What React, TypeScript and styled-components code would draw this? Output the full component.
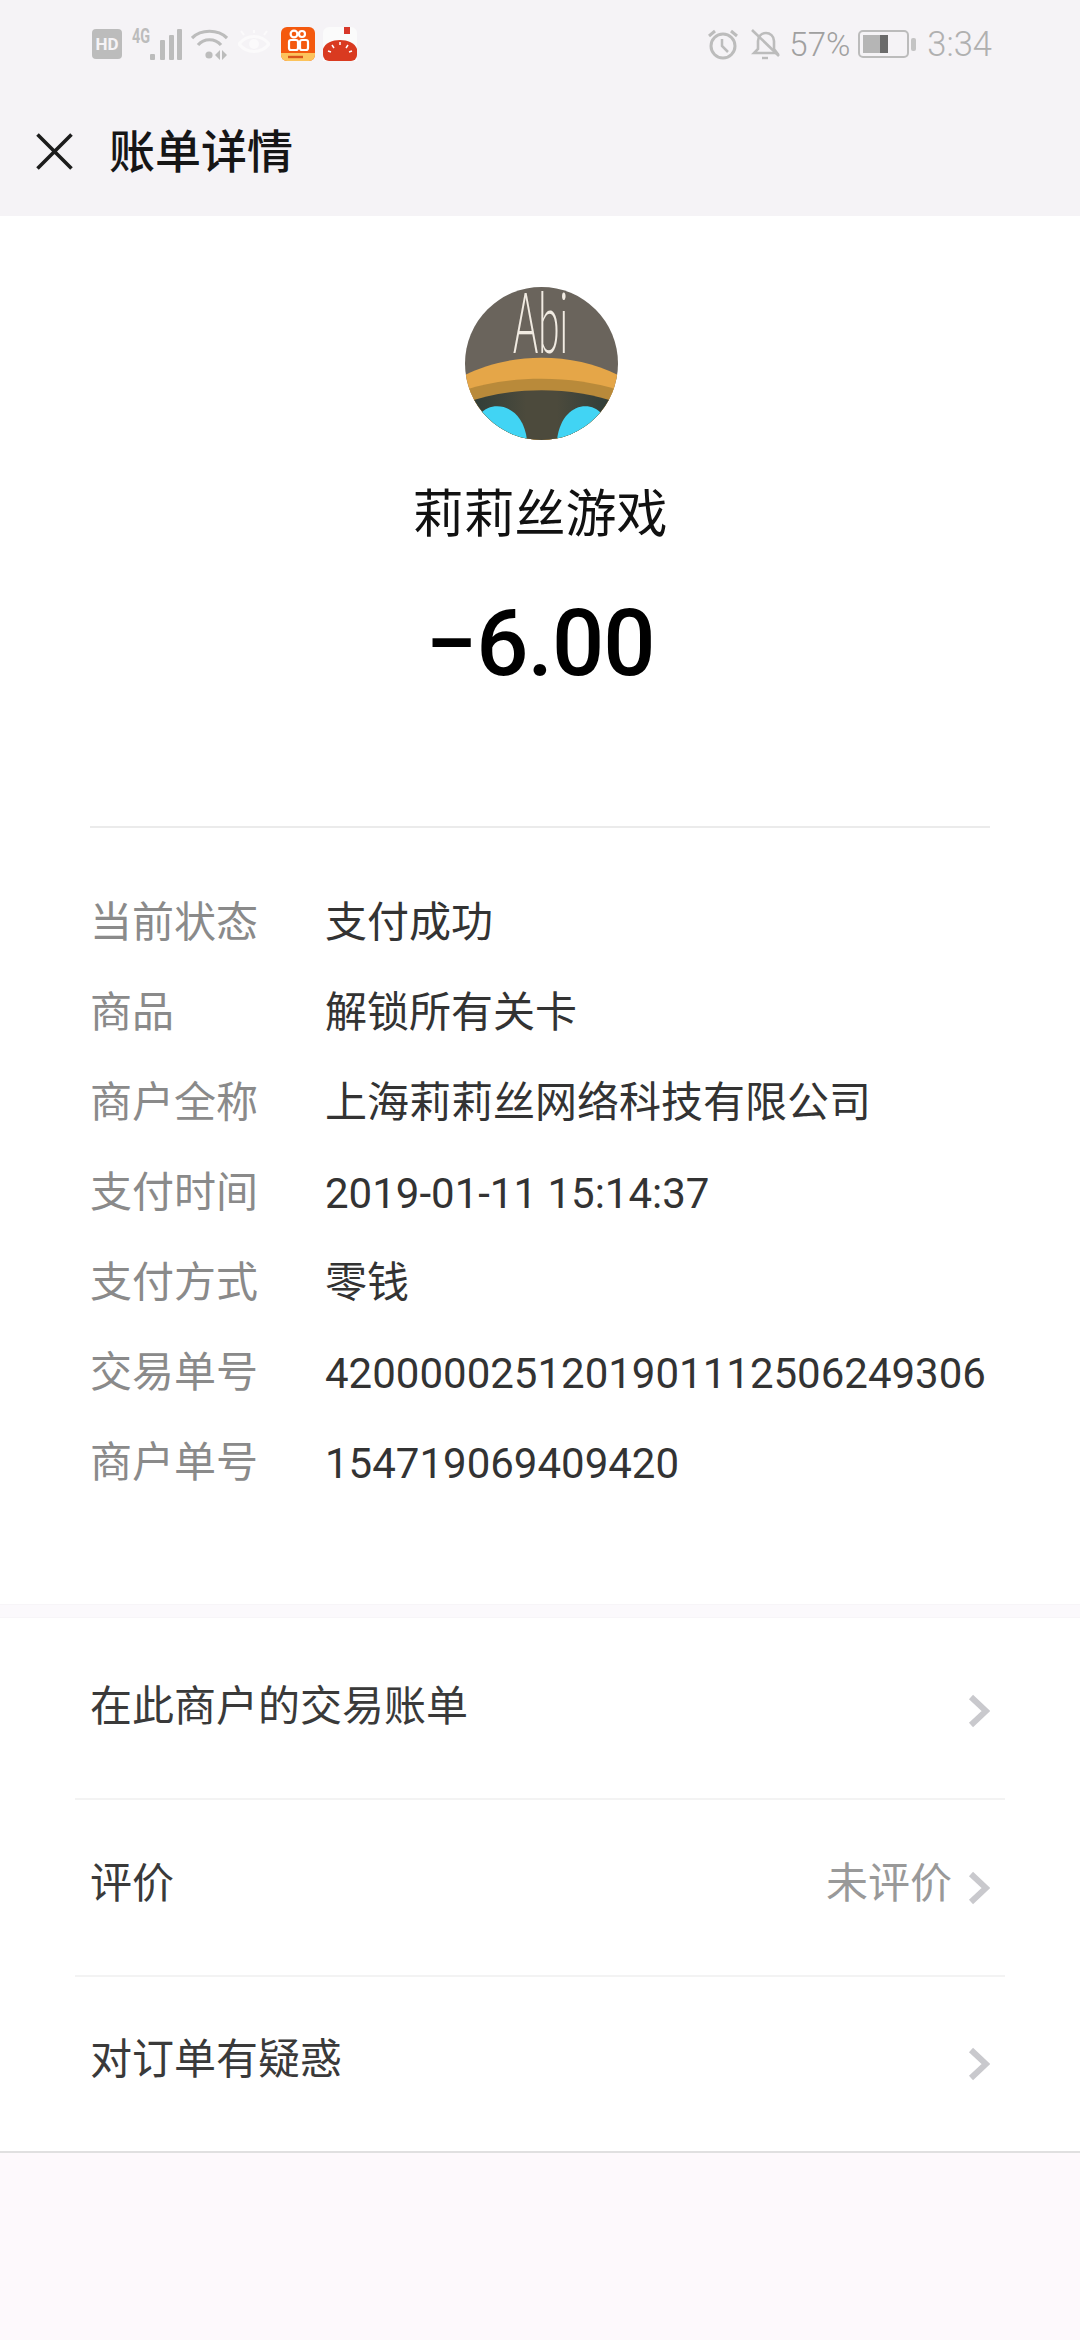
import styled, { createGlobalStyle } from 'styled-components';

const GlobalStyle = createGlobalStyle`
    html, body {
        margin: 0;
        padding: 0;
        background: #fdf9fc;
        font-family: Roboto, 'Noto Sans CJK SC', sans-serif;
    }
`;

const details = [
    { label: '当前状态', value: '支付成功', cjk: true },
    { label: '商品', value: '解锁所有关卡', cjk: true },
    { label: '商户全称', value: '上海莉莉丝网络科技有限公司', cjk: true },
    { label: '支付时间', value: '2019-01-11 15:14:37' },
    { label: '支付方式', value: '零钱', cjk: true },
    { label: '交易单号', value: '4200000251201901112506249306' },
    { label: '商户单号', value: '154719069409420' },
];

const Chevron = () => (
    <ChevronIcon width="22" height="34" viewBox="0 0 22 34">
        <path d="M3 3 L18 17 L3 31" fill="none" stroke="#c9c9cd" strokeWidth="6" />
    </ChevronIcon>
);

const StatusLeft = () => (
    <IconGroup>
        <svg width="30" height="30" viewBox="0 0 30 30">
            <rect width="30" height="30" rx="4" fill="#bcbcbc" />
            <text x="15" y="21" textAnchor="middle" fontSize="17" fontWeight="700" fontFamily="Roboto" fill="#f5f3f6">
                HD
            </text>
        </svg>
        <SignalIcon width="50" height="32" viewBox="0 0 50 32">
            <text x="0" y="15" fontSize="20" fontWeight="700" fontFamily="Roboto" fill="#bcbcbc" textLength="18" lengthAdjust="spacingAndGlyphs">
                4G
            </text>
            <rect x="18" y="26" width="5" height="6" rx="1" fill="#bcbcbc" />
            <rect x="28" y="12" width="5" height="20" rx="1" fill="#bcbcbc" />
            <rect x="37" y="7" width="5" height="25" rx="1" fill="#bcbcbc" />
            <rect x="45" y="1" width="5" height="31" rx="1" fill="#bcbcbc" />
        </SignalIcon>
        <WifiIcon width="37" height="31" viewBox="0 0 37 31">
            <path d="M1 9 C10 0 27 0 36 9" fill="none" stroke="#bcbcbc" strokeWidth="3.2" />
            <path d="M7 16 C13 9 24 9 30 16" fill="none" stroke="#bcbcbc" strokeWidth="3.2" />
            <circle cx="18" cy="26" r="3.6" fill="#bcbcbc" />
            <path d="M24 26 L29 21 V31 Z M31 21 L36 26 L31 31 Z" fill="#bcbcbc" />
        </WifiIcon>
        <EyeIcon width="32" height="28" viewBox="0 0 32 28">
            <path d="M1 14 C9 4 23 4 31 14 C23 24 9 24 1 14 Z" fill="none" stroke="#fbfafb" strokeWidth="3" />
            <circle cx="16" cy="14" r="5" fill="#fbfafb" />
            <path d="M6 5 L3 1 M16 3 V0 M26 5 L29 1" stroke="#fbfafb" strokeWidth="2" />
        </EyeIcon>
        <AppIcons>
            <svg width="34" height="34" viewBox="0 0 34 34">
                <rect width="34" height="34" rx="6" fill="#f4590e" />
                <path d="M0 26 H34 V28 A6 6 0 0 1 28 34 H6 A6 6 0 0 1 0 28 Z" fill="#fcc35c" />
                <path d="M7 30 H22" stroke="#d9541a" strokeWidth="2.4" />
                <circle cx="13" cy="7" r="3.4" fill="none" stroke="#fff" strokeWidth="2.2" />
                <circle cx="21" cy="7" r="3" fill="none" stroke="#fff" strokeWidth="2.2" />
                <rect x="8" y="13" width="9" height="10" rx="2" fill="none" stroke="#fff" strokeWidth="2.2" />
                <rect x="19" y="13" width="8" height="10" rx="2" fill="none" stroke="#fff" strokeWidth="2.2" />
            </svg>
            <svg width="34" height="34" viewBox="0 0 34 34">
                <path d="M6 0 H28 A6 6 0 0 1 34 6 V34 H0 V6 A6 6 0 0 1 6 0 Z" fill="#fbfbfb" />
                <rect x="21" y="0" width="6" height="7" fill="#d8382a" />
                <path d="M0 22 C4 10 30 10 34 22 V28 A6 6 0 0 1 28 34 H6 A6 6 0 0 1 0 28 Z" fill="#d93a20" />
                <path d="M17 15 V18 M9 18 L11 21 M25 18 L23 21 M5 24 L8 25 M29 24 L26 25" stroke="#fff" strokeWidth="1.5" />
            </svg>
        </AppIcons>
    </IconGroup>
);

const StatusRight = () => (
    <IconGroup>
        <svg width="30" height="32" viewBox="0 0 30 32">
            <circle cx="15" cy="18" r="12" fill="none" stroke="#bcbcbc" strokeWidth="3" />
            <path d="M14 11 V18 L20 24" fill="none" stroke="#bcbcbc" strokeWidth="2.5" />
            <path d="M1 8 L7 3 M29 8 L23 3" stroke="#bcbcbc" strokeWidth="3" />
        </svg>
        <BellIcon width="29" height="32" viewBox="0 0 29 32">
            <path d="M3 25 H26 L23 21 V13 C23 8 19 5 15 5 C11 5 7 8 7 13 V21 Z" fill="none" stroke="#bcbcbc" strokeWidth="2.6" />
            <path d="M1 2 L28 28" stroke="#bcbcbc" strokeWidth="2.6" />
            <path d="M11 30 H17" stroke="#bcbcbc" strokeWidth="2.4" />
        </BellIcon>
        <StatusText>57%</StatusText>
        <BatteryIcon width="58" height="28" viewBox="0 0 58 28">
            <rect x="1" y="1" width="49" height="26" rx="4" fill="none" stroke="#bcbcbc" strokeWidth="2" />
            <rect x="5" y="5" width="17" height="18" fill="#b5b5b5" />
            <rect x="22" y="5" width="8" height="18" fill="#6b6b6b" />
            <rect x="53" y="8" width="5" height="13" rx="2" fill="#c4c4c4" />
        </BatteryIcon>
        <StatusTime>3:34</StatusTime>
    </IconGroup>
);

const AbiAvatar = () => (
    <AvatarImage width="153" height="153" viewBox="0 0 153 153">
        <defs>
            <clipPath id="avatarClip">
                <circle cx="76.5" cy="76.5" r="76.5" />
            </clipPath>
            <linearGradient id="archShade" x1="0" x2="1" y1="0" y2="0">
                <stop offset="0.1" stopColor="#343f39" />
                <stop offset="0.4" stopColor="#4c4a3c" />
                <stop offset="0.6" stopColor="#4c4a3c" />
                <stop offset="0.9" stopColor="#343f39" />
            </linearGradient>
        </defs>
        <g clipPath="url(#avatarClip)">
            <rect width="153" height="153" fill="#6a645c" />
            <path d="M0 88 C45 65 108 65 153 88 V153 H0 Z" fill="#e5a648" />
            <path d="M0 103 C45 88 108 88 153 103 V153 H0 Z" fill="#b98a3a" />
            <path d="M0 116 C45 99 108 99 153 116 V153 H0 Z" fill="url(#archShade)" />
            <path d="M15 127 C28 112 58 118 62 153 H15 Z" fill="#41d4f4" />
            <path d="M137 127 C124 112 96 118 92 153 H137 Z" fill="#41d4f4" />
        </g>
        <AvatarText x="48" y="66" textLength="55" lengthAdjust="spacingAndGlyphs">
            Abi
        </AvatarText>
    </AvatarImage>
);

export default function App() {
    return (
        <>
            <GlobalStyle />
            <Page>
                <Header>
                    <StatusBar>
                        <StatusLeft />
                        <StatusRight />
                    </StatusBar>
                    <TitleBar>
                        <svg width="37" height="37" viewBox="0 0 37 37">
                            <path d="M1.5 1.5 L35.5 35.5 M35.5 1.5 L1.5 35.5" stroke="#1c1c1c" strokeWidth="3.6" />
                        </svg>
                        <Title>账单详情</Title>
                    </TitleBar>
                </Header>

                <Summary>
                    <AbiAvatar />
                    <MerchantName>莉莉丝游戏</MerchantName>
                    <Amount>−6.00</Amount>
                </Summary>

                <DetailSection>
                    {details.map((row) => (
                        <DetailRow key={row.label}>
                            <DetailLabel>{row.label}</DetailLabel>
                            <DetailValue $cjk={row.cjk}>{row.value}</DetailValue>
                        </DetailRow>
                    ))}
                </DetailSection>

                <Band />

                <LinkList>
                    <LinkRow>
                        <LinkText>在此商户的交易账单</LinkText>
                        <Chevron />
                    </LinkRow>
                    <LinkRow>
                        <LinkText>评价</LinkText>
                        <LinkNote>未评价</LinkNote>
                        <Chevron />
                    </LinkRow>
                    <LinkRow $last>
                        <LinkText>对订单有疑惑</LinkText>
                        <Chevron />
                    </LinkRow>
                </LinkList>
            </Page>
        </>
    );
}

const Page = styled.div`
    display: flex;
    flex-direction: column;
    width: 1080px;
    height: 2340px;
    overflow: hidden;
    background: #fdf9fc;
`;

const Header = styled.div`
    height: 216px;
    background: #f5f3f6;
    box-sizing: border-box;
    padding-top: 24px;
`;

const StatusBar = styled.div`
    display: flex;
    justify-content: space-between;
    align-items: center;
    height: 40px;
    padding: 0 88px 0 92px;
`;

const IconGroup = styled.div`
    display: flex;
    align-items: center;
`;

const SignalIcon = styled.svg`
    margin-left: 10px;
    overflow: visible;
`;

const WifiIcon = styled.svg`
    margin-left: 9px;
`;

const EyeIcon = styled.svg`
    margin-left: 10px;
`;

const BellIcon = styled.svg`
    margin-left: 13px;
`;

const BatteryIcon = styled.svg`
    margin-left: 9px;
`;

const AppIcons = styled.div`
    display: flex;
    gap: 8px;
    margin-left: 11px;
`;

const StatusText = styled.span`
    margin-left: 9px;
    width: 60px;
    font-size: 33px;
    font-weight: 300;
    white-space: nowrap;
    color: #a0a0a0;
`;

const StatusTime = styled.span`
    margin-left: 11px;
    font-size: 34.5px;
    font-weight: 300;
    color: #b0b0b0;
`;

const TitleBar = styled.div`
    display: flex;
    align-items: center;
    gap: 36px;
    height: 60px;
    margin-top: 57px;
    padding-left: 36px;
`;

const Title = styled.div`
    padding-bottom: 6px;
    font-size: 46px;
    font-weight: 500;
    color: #161616;
`;

const Summary = styled.div`
    display: flex;
    flex-direction: column;
    align-items: center;
    height: 610px;
    box-sizing: border-box;
    padding-top: 71px;
    background: #fff;
`;

const AvatarImage = styled.svg`
    display: block;
    flex: none;
    margin-left: 3px;
    overflow: visible;
`;

const AvatarText = styled.text`
    font-family: Lato, sans-serif;
    font-size: 84px;
    font-weight: 300;
    fill: #f1ebe2;
`;

const MerchantName = styled.div`
    margin-top: 42px;
    font-size: 51px;
    line-height: 66px;
    color: #111;
`;

const Amount = styled.div`
    margin-top: 46px;
    font-size: 92px;
    line-height: 100px;
    font-weight: 500;
    letter-spacing: -1px;
    color: #000;
`;

const DetailSection = styled.div`
    height: 778px;
    box-sizing: border-box;
    padding: 52px 90px 0;
    background: #fff;
    position: relative;

    &::before {
        content: '';
        position: absolute;
        top: 0;
        left: 90px;
        right: 90px;
        height: 2px;
        background: #ebebeb;
    }
`;

const DetailRow = styled.div`
    display: flex;
    align-items: center;
    height: 90px;
    font-size: 42px;
`;

const DetailLabel = styled.div`
    width: 235px;
    flex: none;
    padding-bottom: 10px;
    color: #8a8a8a;
`;

const DetailValue = styled.div<{ $cjk?: boolean }>`
    padding-bottom: ${({ $cjk }) => ($cjk ? '10px' : '0')};
    color: #333;
    white-space: nowrap;
`;

const Band = styled.div`
    height: 14px;
    box-sizing: border-box;
    background: #fbf9fc;
    border-top: 1px solid #f7f5f8;
    border-bottom: 1px solid #f7f5f8;
`;

const LinkList = styled.div`
    padding-top: 5px;
    background: #fff;
    border-bottom: 2px solid #e0e0e0;
`;

const LinkRow = styled.div<{ $last?: boolean }>`
    display: flex;
    align-items: center;
    height: ${({ $last }) => ($last ? '174px' : '177px')};
    margin: 0 75px;
    padding: 0 15px;
    box-sizing: border-box;
    border-bottom: ${({ $last }) => ($last ? 'none' : '2px solid #f3f3f3')};
`;

const LinkText = styled.div`
    flex: 1;
    padding-bottom: 17px;
    font-size: 42px;
    color: #3a3a3a;
`;

const LinkNote = styled.div`
    margin-right: 16px;
    padding-bottom: 17px;
    font-size: 42px;
    color: #999;
`;

const ChevronIcon = styled.svg`
    flex: none;
`;
